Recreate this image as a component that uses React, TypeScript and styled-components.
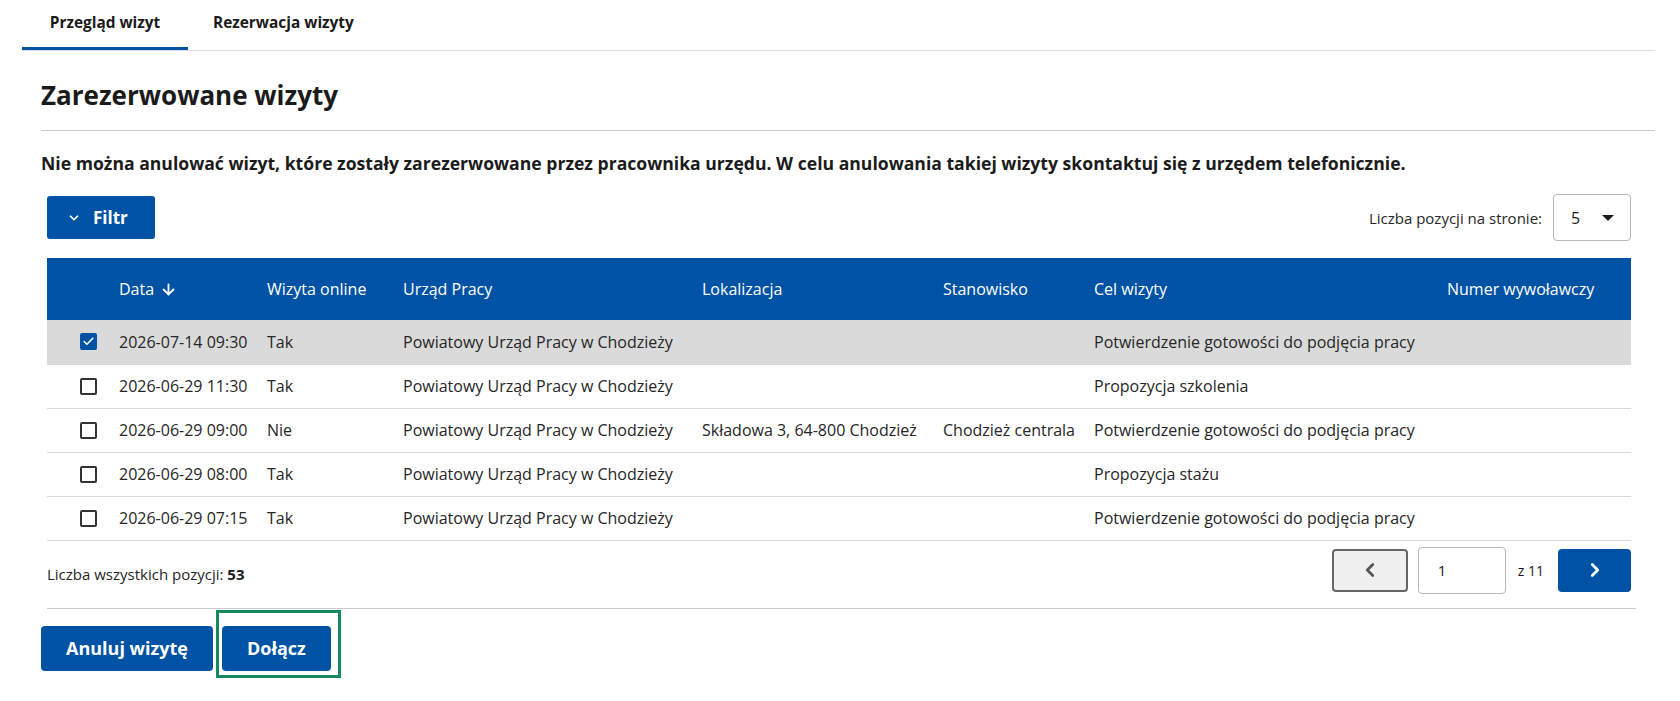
import React, { useState } from "react";
import styled, { createGlobalStyle } from "styled-components";
import { ArrowDown, ChevronDown, ChevronLeft, ChevronRight, Check } from "lucide-react";

const GlobalStyle = createGlobalStyle`
  html, body {
    margin: 0;
    padding: 0;
    background: #ffffff;
    font-family: "Open Sans", "Noto Sans", sans-serif;
    color: #1b1b1b;
  }
  * { box-sizing: border-box; }
`;

const BLUE = "#0052a5";

const rows = [
  { date: "2026-07-14 09:30", online: "Tak", office: "Powiatowy Urząd Pracy w Chodzieży", place: "", post: "", goal: "Potwierdzenie gotowości do podjęcia pracy", checked: true },
  { date: "2026-06-29 11:30", online: "Tak", office: "Powiatowy Urząd Pracy w Chodzieży", place: "", post: "", goal: "Propozycja szkolenia", checked: false },
  { date: "2026-06-29 09:00", online: "Nie", office: "Powiatowy Urząd Pracy w Chodzieży", place: "Składowa 3, 64-800 Chodzież", post: "Chodzież centrala", goal: "Potwierdzenie gotowości do podjęcia pracy", checked: false },
  { date: "2026-06-29 08:00", online: "Tak", office: "Powiatowy Urząd Pracy w Chodzieży", place: "", post: "", goal: "Propozycja stażu", checked: false },
  { date: "2026-06-29 07:15", online: "Tak", office: "Powiatowy Urząd Pracy w Chodzieży", place: "", post: "", goal: "Potwierdzenie gotowości do podjęcia pracy", checked: false },
];

const colWidths = [64, 148, 136, 299, 241, 151, 353, 192];

export default function App() {
  const [selected, setSelected] = useState<boolean[]>(rows.map((r) => r.checked));

  const toggle = (i: number) =>
    setSelected((s) => s.map((v, j) => (j === i ? !v : v)));

  return (
    <>
      <GlobalStyle />
      <Page>
        <Tabs>
          <Tab $active>Przegląd wizyt</Tab>
          <Tab>Rezerwacja wizyty</Tab>
        </Tabs>

        <Content>
          <Heading>Zarezerwowane wizyty</Heading>
          <Notice>
            Nie można anulować wizyt, które zostały zarezerwowane przez pracownika urzędu. W celu anulowania takiej wizyty skontaktuj się z urzędem telefonicznie.
          </Notice>

          <TableArea>
            <Toolbar>
              <FilterButton>
                <ChevronDown size={14} strokeWidth={3} />
                Filtr
              </FilterButton>
              <PerPage>
                Liczba pozycji na stronie:
                <Select>
                  <span>5</span>
                  <Caret />
                </Select>
              </PerPage>
            </Toolbar>

            <Table>
              <colgroup>
                {colWidths.map((w, i) => (
                  <col key={i} style={{ width: w }} />
                ))}
              </colgroup>
              <thead>
                <tr>
                  <Th />
                  <Th>
                    <SortLabel>
                      Data <ArrowDown size={17} strokeWidth={2.6} />
                    </SortLabel>
                  </Th>
                  <Th>Wizyta online</Th>
                  <Th>Urząd Pracy</Th>
                  <Th>Lokalizacja</Th>
                  <Th>Stanowisko</Th>
                  <Th>Cel wizyty</Th>
                  <Th>Numer wywoławczy</Th>
                </tr>
              </thead>
              <tbody>
                {rows.map((r, i) => (
                  <Tr key={i} $selected={selected[i]}>
                    <CheckCell>
                      <Box $checked={selected[i]} onClick={() => toggle(i)}>
                        {selected[i] && <Check size={13} strokeWidth={3} color="#fff" />}
                      </Box>
                    </CheckCell>
                    <Td>{r.date}</Td>
                    <Td>{r.online}</Td>
                    <Td>{r.office}</Td>
                    <Td>{r.place}</Td>
                    <Td>{r.post}</Td>
                    <Td>{r.goal}</Td>
                    <Td />
                  </Tr>
                ))}
              </tbody>
            </Table>

            <Footer>
              <Total>
                Liczba wszystkich pozycji: <b>53</b>
              </Total>
              <Pager>
                <PrevButton>
                  <ChevronLeft size={22} strokeWidth={3} />
                </PrevButton>
                <PageInput>1</PageInput>
                <PageCount>z 11</PageCount>
                <NextButton>
                  <ChevronRight size={22} strokeWidth={3} />
                </NextButton>
              </Pager>
            </Footer>
          </TableArea>

          <Actions>
            <PrimaryButton $offset>Anuluj wizytę</PrimaryButton>
            <FocusRing>
              <PrimaryButton>Dołącz</PrimaryButton>
            </FocusRing>
          </Actions>
        </Content>
      </Page>
    </>
  );
}

const Page = styled.div`
  width: 1680px;
  padding: 0 25px 0 22px;
`;

const Tabs = styled.div`
  display: flex;
  height: 51px;
  border-bottom: 1px solid #dcdfe6;
`;

const Tab = styled.div<{ $active?: boolean }>`
  display: flex;
  align-items: center;
  justify-content: center;
  height: 50px;
  padding: 0 25px 2px;
  width: ${(p) => (p.$active ? "166px" : "auto")};
  font-size: 15.4px;
  font-weight: 700;
  color: #1b1b1b;
  border-bottom: 3px solid ${(p) => (p.$active ? BLUE : "transparent")};
  margin-bottom: -1px;
  cursor: pointer;
`;

const Content = styled.div`
  padding: 0 0 0 19px;
`;

const Heading = styled.h1`
  margin: 0;
  padding: 27px 0 18px;
  font-size: 26px;
  line-height: 34px;
  font-weight: 700;
  color: #1b1b1b;
  border-bottom: 1px solid #c8cad0;
`;

const Notice = styled.p`
  margin: 0;
  padding: 20px 0 0;
  font-size: 17.6px;
  line-height: 24px;
  font-weight: 700;
  color: #1b1b1b;
`;

const TableArea = styled.div`
  width: 1595px;
  padding: 0 0 0 6px;
`;

const Toolbar = styled.div`
  display: flex;
  align-items: center;
  justify-content: space-between;
  width: 1584px;
  padding: 19px 0 17px;
`;

const FilterButton = styled.button`
  display: flex;
  align-items: center;
  gap: 12px;
  height: 43px;
  width: 108px;
  padding: 0 0 0 20px;
  background: ${BLUE};
  color: #fff;
  border: none;
  border-radius: 3px;
  font-family: inherit;
  font-size: 17px;
  font-weight: 700;
  cursor: pointer;
`;

const PerPage = styled.div`
  display: flex;
  align-items: center;
  gap: 11px;
  font-size: 15px;
  color: #262626;
`;

const Select = styled.div`
  display: flex;
  align-items: center;
  justify-content: space-between;
  width: 78px;
  height: 47px;
  padding: 0 16px 0 17px;
  border: 1px solid #b9b9b9;
  border-radius: 4px;
  font-size: 16px;
  color: #1b1b1b;
`;

const Caret = styled.span`
  width: 0;
  height: 0;
  border-left: 6px solid transparent;
  border-right: 6px solid transparent;
  border-top: 6px solid #1b1b1b;
`;

const Table = styled.table`
  width: 1584px;
  table-layout: fixed;
  border-collapse: collapse;
  font-size: 16px;
`;

const Th = styled.th`
  height: 62px;
  padding: 0 8px;
  background: ${BLUE};
  color: #fff;
  font-weight: 400;
  text-align: left;
  white-space: nowrap;
`;

const SortLabel = styled.span`
  display: inline-flex;
  align-items: center;
  gap: 6px;
`;

const Tr = styled.tr<{ $selected?: boolean }>`
  height: 44px;
  background: ${(p) => (p.$selected ? "#dadada" : "#fff")};
  border-bottom: 1px solid #dadada;
`;

const Td = styled.td`
  padding: 0 8px;
  color: #262626;
  white-space: nowrap;
`;

const CheckCell = styled.td`
  padding: 0 0 0 33px;
`;

const Box = styled.span<{ $checked?: boolean }>`
  display: flex;
  align-items: center;
  justify-content: center;
  width: 17px;
  height: 17px;
  border-radius: 2px;
  border: 2px solid ${(p) => (p.$checked ? BLUE : "#333")};
  background: ${(p) => (p.$checked ? BLUE : "#fff")};
  cursor: pointer;
`;

const Footer = styled.div`
  display: flex;
  align-items: center;
  justify-content: space-between;
  width: 1589px;
  padding: 6px 5px 14px 0;
  border-bottom: 1px solid #c8cad0;
`;

const Total = styled.div`
  font-size: 15px;
  color: #262626;
  padding-top: 7px;
  b {
    font-weight: 700;
    color: #1b1b1b;
  }
`;

const Pager = styled.div`
  display: flex;
  align-items: center;
`;

const PrevButton = styled.button`
  display: flex;
  align-items: center;
  justify-content: center;
  width: 76px;
  height: 43px;
  background: #f0f0f0;
  border: 2px solid #666;
  border-radius: 4px;
  color: #555;
  margin-right: 10px;
`;

const PageInput = styled.div`
  display: flex;
  align-items: center;
  width: 88px;
  height: 47px;
  padding-left: 19px;
  border: 1px solid #b9b9b9;
  border-radius: 4px;
  font-size: 15px;
  color: #1b1b1b;
`;

const PageCount = styled.span`
  margin: 0 14px 0 12px;
  font-size: 14px;
  color: #1b1b1b;
`;

const NextButton = styled.button`
  display: flex;
  align-items: center;
  justify-content: center;
  width: 73px;
  height: 43px;
  background: ${BLUE};
  border: none;
  border-radius: 4px;
  color: #fff;
`;

const Actions = styled.div`
  display: flex;
  align-items: flex-start;
  gap: 3px;
  padding-top: 1px;
`;

const FocusRing = styled.div`
  display: flex;
  padding: 13px 7px 4px 3px;
  border: 3px solid #168a5e;
`;

const PrimaryButton = styled.button<{ $offset?: boolean }>`
  height: 45px;
  padding: 0 25px;
  margin-top: ${(p) => (p.$offset ? "16px" : "0")};
  background: ${BLUE};
  color: #fff;
  border: none;
  border-radius: 4px;
  font-family: inherit;
  font-size: 18px;
  font-weight: 700;
  cursor: pointer;
`;
